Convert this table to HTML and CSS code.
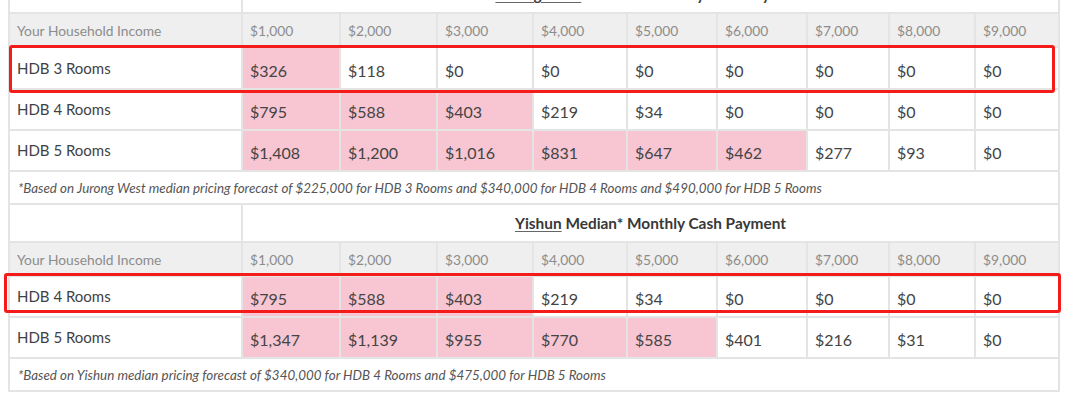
FILE: index.html
```html
<!DOCTYPE html>
<html lang="en">
<head>
<meta charset="utf-8">
<title>Median Monthly Cash Payment</title>
<link rel="stylesheet" href="styles.css">
</head>
<body>
<div class="page">
  <table class="pay">
    <colgroup>
      <col class="c-label">
      <col class="c1"><col class="c2"><col class="c3"><col class="c4"><col class="c5">
      <col class="c6"><col class="c7"><col class="c8"><col class="c9">
    </colgroup>
    <tbody>
      <tr class="title-row">
        <td></td>
        <td colspan="9" class="title"><span class="town">Jurong West</span> Median* Monthly Cash Payment</td>
      </tr>
      <tr class="head-row">
        <td>Your Household Income</td>
        <td>$1,000</td><td>$2,000</td><td>$3,000</td><td>$4,000</td><td>$5,000</td><td>$6,000</td><td>$7,000</td><td>$8,000</td><td>$9,000</td>
      </tr>
      <tr class="data-row first">
        <td class="label">HDB 3 Rooms</td>
        <td class="hl">$326</td><td>$118</td><td>$0</td><td>$0</td><td>$0</td><td>$0</td><td>$0</td><td>$0</td><td>$0</td>
      </tr>
      <tr class="data-row">
        <td class="label">HDB 4 Rooms</td>
        <td class="hl">$795</td><td class="hl">$588</td><td class="hl">$403</td><td>$219</td><td>$34</td><td>$0</td><td>$0</td><td>$0</td><td>$0</td>
      </tr>
      <tr class="data-row">
        <td class="label">HDB 5 Rooms</td>
        <td class="hl">$1,408</td><td class="hl">$1,200</td><td class="hl">$1,016</td><td class="hl">$831</td><td class="hl">$647</td><td class="hl">$462</td><td>$277</td><td>$93</td><td>$0</td>
      </tr>
      <tr class="note-row">
        <td colspan="10">*Based on Jurong West median pricing forecast of $225,000 for HDB 3 Rooms and $340,000 for HDB 4 Rooms and $490,000 for HDB 5 Rooms</td>
      </tr>
      <tr class="title-row">
        <td></td>
        <td colspan="9" class="title"><span class="town">Yishun</span> Median* Monthly Cash Payment</td>
      </tr>
      <tr class="head-row">
        <td>Your Household Income</td>
        <td>$1,000</td><td>$2,000</td><td>$3,000</td><td>$4,000</td><td>$5,000</td><td>$6,000</td><td>$7,000</td><td>$8,000</td><td>$9,000</td>
      </tr>
      <tr class="data-row">
        <td class="label">HDB 4 Rooms</td>
        <td class="hl">$795</td><td class="hl">$588</td><td class="hl">$403</td><td>$219</td><td>$34</td><td>$0</td><td>$0</td><td>$0</td><td>$0</td>
      </tr>
      <tr class="data-row">
        <td class="label">HDB 5 Rooms</td>
        <td class="hl">$1,347</td><td class="hl">$1,139</td><td class="hl">$955</td><td class="hl">$770</td><td class="hl">$585</td><td>$401</td><td>$216</td><td>$31</td><td>$0</td>
      </tr>
      <tr class="note-row">
        <td colspan="10">*Based on Yishun median pricing forecast of $340,000 for HDB 4 Rooms and $475,000 for HDB 5 Rooms</td>
      </tr>
    </tbody>
  </table>
  <div class="mark mark-1"></div>
  <div class="mark mark-2"></div>
</div>
</body>
</html>
```

FILE: styles.css
```css
html, body {
  margin: 0;
  padding: 0;
  background: #ffffff;
}

body {
  font-family: "Lato", "Open Sans", "Liberation Sans", sans-serif;
  color: #444444;
  overflow: hidden;
}

.page {
  position: relative;
  margin: -26px 0 0 8px;
  width: 1052px;
}

.pay {
  border-collapse: collapse;
  table-layout: fixed;
  width: 1051px;
  border: 2px solid #e4e4e4;
}

.c-label { width: 233px; }
.c1 { width: 98px; }
.c2 { width: 97px; }
.c3 { width: 96px; }
.c4 { width: 94px; }
.c5 { width: 90px; }
.c6 { width: 90px; }
.c7 { width: 82px; }
.c8 { width: 86px; }
.c9 { width: 84px; }

.pay td {
  border: 2px solid #e4e4e4;
  padding: 0 0 0 7px;
  white-space: nowrap;
  overflow: hidden;
}

.title-row td {
  height: 36px;
  background: #ffffff;
}

.title {
  text-align: center;
  font-size: 15.4px;
  font-weight: 700;
  color: #383838;
  padding: 0 !important;
}

.town {
  text-decoration: underline;
  text-underline-offset: 2px;
  text-decoration-color: #666666;
}

.head-row td {
  height: 32px;
  background: #efefef;
  font-size: 13.8px;
  color: #8c8c8c;
  vertical-align: middle;
}

.data-row td {
  height: 26px;
  vertical-align: top;
  font-size: 16px;
  line-height: 18px;
  padding-top: 13px;
  color: #444444;
}

.data-row td.label {
  font-size: 15px;
  height: 29px;
  padding-top: 10px;
  color: #3f3f46;
}

.data-row.first td {
  height: 26px;
  padding-top: 14px;
}

.data-row.first td.label {
  height: 29px;
  padding-top: 11px;
}

.data-row td.hl {
  background: #f7c6d2;
}

.note-row td {
  height: 31px;
  font-size: 13.4px;
  font-style: italic;
  color: #555555;
  padding-left: 8px;
  vertical-align: middle;
}

.mark {
  position: absolute;
  border: 3px solid #f41b1b;
  border-radius: 3px;
  box-sizing: border-box;
}

.mark-1 {
  left: 1px;
  top: 71px;
  width: 1046px;
  height: 48px;
}

.mark-2 {
  left: -4px;
  top: 299px;
  width: 1057px;
  height: 40px;
}
```
